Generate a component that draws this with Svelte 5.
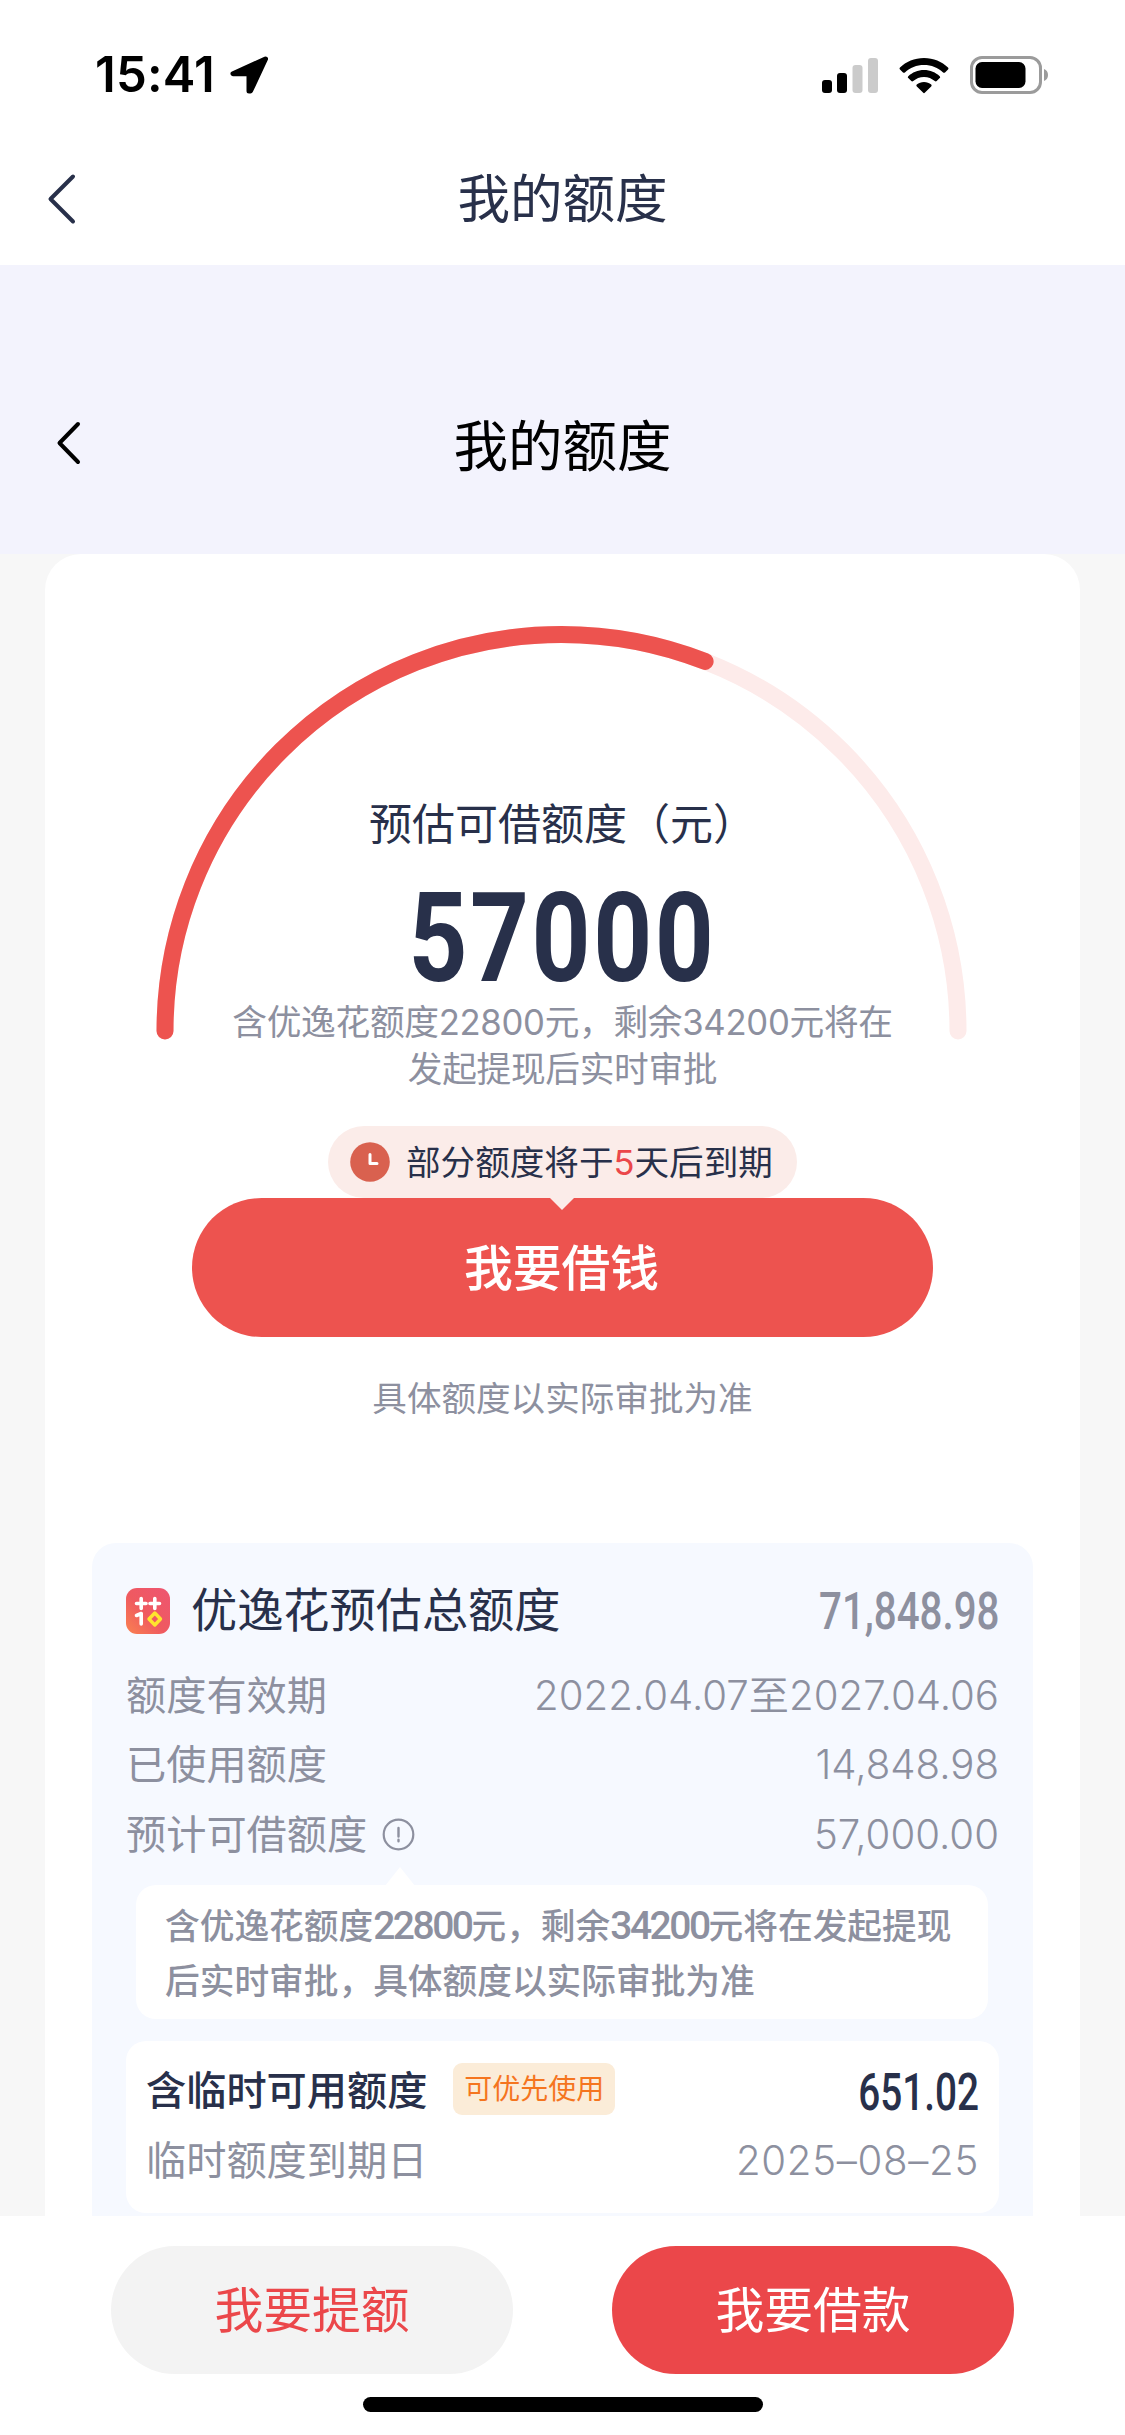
<script lang="ts">
	const radius = 396.5;
	const arc = `M ${412.5 - radius} 413 A ${radius} ${radius} 0 0 1 ${412.5 + radius} 413`;
	const progress = 61.8;

	const rows = [
		{ label: '额度有效期', value: '2022.04.07至2027.04.06' },
		{ label: '已使用额度', value: '14,848.98' },
		{ label: '预计可借额度', value: '57,000.00', info: true },
	];
</script>

<div class="screen">
	<div class="status-bar">
		<span class="time">15:41</span>
		<svg class="location" width="40" height="40" viewBox="0 0 40 40">
			<path d="M36.500 4L4 18.800H20V36L21.500 36z" stroke="#000" stroke-width="5" stroke-linejoin="round" />
		</svg>
		<div class="indicators">
			<svg width="56" height="37" viewBox="0 0 56 37">
				<rect x="0" y="23" width="10" height="13" rx="3" />
				<rect x="15" y="16" width="10" height="20" rx="3" />
				<rect x="30.500" y="8" width="10" height="28" rx="3" fill="#cbcbcb" />
				<rect x="46" y="1" width="10" height="35" rx="3" fill="#cbcbcb" />
			</svg>
			<svg class="wifi" width="50" height="37" viewBox="0 0 50 37">
				<path d="M25 1C15.500 1 7 4.600 1 10.500c-.6.600-.6 1.300 0 1.900l3 3c.6.600 1.300.6 1.900 0C11 10.500 17.600 7.900 25 7.900s14 2.600 19.100 7.500c.6.600 1.300.600 1.900 0l3-3c.6-.6.6-1.300 0-1.900C43 4.600 34.500 1 25 1z" />
				<path d="M25 13c-6.200 0-11.700 2.400-15.700 6.200-.6.600-.6 1.300 0 1.900l3 3c.6.600 1.300.6 1.900 0 2.900-2.700 6.600-4.200 10.800-4.200s7.900 1.500 10.800 4.200c.6.600 1.300.6 1.900 0l3-3c.6-.6.6-1.300 0-1.900C36.700 15.400 31.200 13 25 13z" />
				<path d="M25 25c-2.800 0-5.300 1-7.200 2.600-.6.500-.6 1.200 0 1.800l6.200 6.200c.7.700 1.300.7 2 0l6.200-6.200c.6-.6.6-1.300 0-1.800C30.300 26 27.800 25 25 25z" />
			</svg>
			<svg class="battery" width="79" height="38" viewBox="0 0 79 38">
				<rect x="1.500" y="1.500" width="69" height="35" rx="10.500" fill="none" stroke="#9b9b9b" stroke-width="3" />
				<rect x="5.500" y="6" width="50" height="26" rx="6.500" />
				<path d="M74 13c2.600.9 4 3.200 4 6s-1.400 5.100-4 6z" fill="#9b9b9b" />
			</svg>
		</div>
	</div>

	<header class="app-bar">
		<svg class="back" width="30" height="52" viewBox="0 0 30 52">
			<path d="M27 3.500L4.500 26 27 48.500" />
		</svg>
		<h1>我的额度</h1>
	</header>

	<header class="page-bar">
		<svg class="back" width="26" height="44" viewBox="0 0 26 44">
			<path d="M22 3L3.500 22 22 41" />
		</svg>
		<h2>我的额度</h2>
	</header>

	<main class="card">
		<section class="gauge">
			<svg class="gauge-arc" width="825" height="424" viewBox="0 0 825 424">
				<path d={arc} stroke="#fdebea" />
				<path d={arc} stroke="#ed534f" pathLength="100" stroke-dasharray="{progress} 200" />
			</svg>
			<p class="gauge-label">预估可借额度（元）</p>
			<p class="gauge-amount"><span class="condensed">57000</span></p>
			<p class="gauge-note">含优逸花额度22800元，剩余34200元将在<br />发起提现后实时审批</p>
		</section>

		<div class="bubble">
			<svg width="40" height="40" viewBox="0 0 40 40">
				<circle cx="20" cy="20" r="19.800" fill="#d9614f" />
				<path d="M20 12.500V21.500H27" fill="none" stroke="#fff" stroke-width="3" stroke-linecap="round" stroke-linejoin="round" />
			</svg>
			<span>部分额度将于<em>5</em>天后到期</span>
		</div>
		<button class="borrow">我要借钱</button>
		<p class="disclaimer">具体额度以实际审批为准</p>

		<section class="detail">
			<div class="detail-head">
				<svg width="44" height="46" viewBox="0 0 44 46">
					<defs>
						<linearGradient id="logo" x1="0" y1="1" x2="1" y2="0">
							<stop offset="0" stop-color="#fa8250" />
							<stop offset=".45" stop-color="#ef5a60" />
							<stop offset="1" stop-color="#ee5571" />
						</linearGradient>
					</defs>
					<rect width="44" height="46" rx="11" fill="url(#logo)" />
					<path d="M10.500 15.500H20M15.200 10.500V20.500M24 15.500H33.500M28.800 10.500V20.500M10.500 27.500L15.200 25.500V36" fill="none" stroke="#fff" stroke-width="3.600" stroke-linecap="round" stroke-linejoin="round" />
					<path d="M28.800 25L34.500 31 28.800 37 23 31z" fill="none" stroke="#ffe42e" stroke-width="3.400" stroke-linejoin="round" />
				</svg>
				<h3>优逸花预估总额度</h3>
				<span class="amount muted condensed">71,848.98</span>
			</div>

			{#each rows as row}
				<div class="row">
					<span>{row.label}</span>
					{#if row.info}
						<svg class="info" width="33" height="33" viewBox="0 0 33 33">
							<circle cx="16.500" cy="16.500" r="14.800" fill="none" stroke="#8d909f" stroke-width="2.200" />
							<path d="M16.500 10V18.500M16.500 21.800V23.200" stroke="#8d909f" stroke-width="2.400" stroke-linecap="round" />
						</svg>
					{/if}
					<span class="value">{row.value}</span>
				</div>
			{/each}

			<div class="tip">
				含优逸花额度<b>22800</b>元，剩余<b>34200</b>元将在发起提现<br />后实时审批，具体额度以实际审批为准
			</div>

			<div class="temp">
				<div class="temp-head">
					<h4>含临时可用额度</h4>
					<span class="tag">可优先使用</span>
					<span class="amount condensed">651.02</span>
				</div>
				<div class="row">
					<span>临时额度到期日</span>
					<span class="value date">2025–08–25</span>
				</div>
			</div>
		</section>
	</main>

	<footer class="actions">
		<div class="buttons">
			<button class="raise">我要提额</button>
			<button class="loan">我要借款</button>
		</div>
		<div class="home-indicator"></div>
	</footer>
</div>

<style>
	:global(body) {
		margin: 0;
	}

	.screen {
		width: 1125px;
		height: 2435px;
		display: flex;
		flex-direction: column;
		overflow: hidden;
		background: #f7f7f7;
		color: #28304a;
		font-family: Inter, 'Noto Sans CJK SC', sans-serif;
		line-height: 1.3;
	}

	h1, h2, h3, h4, p {
		margin: 0;
		font-weight: inherit;
	}

	button {
		border: none;
		padding: 0;
		font-family: inherit;
		line-height: 1.3;
	}

	svg {
		flex: none;
		display: block;
	}

	.status-bar {
		flex: none;
		height: 132px;
		box-sizing: border-box;
		padding: 18px 76px 0 95px;
		display: flex;
		align-items: center;
		background: #fff;
		color: #000;
	}

	.time {
		width: 134px;
		font-size: 49px;
		font-weight: 600;
		letter-spacing: 0.2px;
	}

	.indicators {
		margin-left: auto;
		display: flex;
		align-items: center;
	}

	.wifi {
		margin-left: 21px;
	}

	.battery {
		margin-left: 21px;
	}

	.app-bar, .page-bar {
		flex: none;
		box-sizing: border-box;
		display: grid;
		grid-template-columns: 100px 1fr 100px;
		align-items: center;
		text-align: center;
	}

	.back path {
		fill: none;
		stroke: currentColor;
		stroke-width: 4;
		stroke-linecap: round;
		stroke-linejoin: round;
	}

	.app-bar {
		height: 133px;
		background: #fff;
	}

	.app-bar .back {
		margin-left: 46px;
	}

	.app-bar h1 {
		font-size: 52.5px;
		line-height: 74px;
	}

	.page-bar {
		height: 289px;
		padding-top: 73px;
		background: #f3f3fd;
		color: #000;
	}

	.page-bar .back {
		margin: 0 0 6px 56px;
	}

	.page-bar h2 {
		font-size: 54.5px;
		line-height: 76px;
	}

	.card {
		flex: 1;
		min-height: 0;
		overflow: hidden;
		margin: 0 45px;
		padding: 0 47px;
		display: flex;
		flex-direction: column;
		align-items: center;
		background: #fff;
		border-radius: 36px 36px 0 0;
	}

	.gauge {
		position: relative;
		flex: none;
		height: 572px;
		width: 100%;
		box-sizing: border-box;
		padding-top: 240px;
		text-align: center;
	}

	.gauge-arc {
		position: absolute;
		left: 56.5px;
		top: 64px;
	}

	.gauge-arc path {
		fill: none;
		stroke-width: 17;
		stroke-linecap: round;
	}

	.gauge-label {
		font-size: 43px;
		line-height: 60px;
	}

	.condensed {
		display: inline-block;
		font-family: Roboto, sans-serif;
		transform: scaleX(0.83);
	}

	.gauge-amount {
		padding: 26px 0 4px;
		font-size: 124px;
		font-weight: 700;
		letter-spacing: 3px;
		line-height: 112px;
	}

	.gauge-note {
		margin: 0 -10px;
		font-size: 34.700px;
		letter-spacing: -0.3px;
		line-height: 46.500px;
		color: #8d909f;
	}

	.bubble {
		position: relative;
		flex: none;
		width: 469px;
		height: 72px;
		box-sizing: border-box;
		padding-left: 22px;
		display: flex;
		align-items: center;
		gap: 16px;
		border-radius: 36px;
		background: #fbece9;
		font-size: 34.600px;
		white-space: nowrap;
	}

	.bubble::after {
		content: '';
		position: absolute;
		left: 221px;
		top: 71px;
		border: 13px solid transparent;
		border-top-color: #fbece9;
		border-bottom: none;
	}

	.bubble em {
		font-style: normal;
		color: #eb474a;
	}

	.borrow {
		flex: none;
		width: 741px;
		height: 139px;
		padding: 2px 2px 0 0;
		border-radius: 70px;
		background: #ed534f;
		color: #fff;
		font-size: 48.800px;
		font-weight: 500;
	}

	.disclaimer {
		flex: none;
		margin-top: 37px;
		font-size: 34.600px;
		line-height: 48px;
		color: #8d909f;
	}

	.detail {
		flex: none;
		width: 100%;
		box-sizing: border-box;
		margin-top: 121px;
		padding: 32px 34px 30px;
		border-radius: 24px;
		background: #f6f9ff;
	}

	.detail-head {
		display: flex;
		align-items: center;
		height: 72px;
		margin-bottom: 14px;
	}

	.detail-head h3 {
		margin-left: 21px;
		padding-bottom: 2px;
		font-size: 46.200px;
		line-height: 66px;
	}

	.amount {
		margin-left: auto;
		padding-top: 2px;
		font-size: 51px;
		font-weight: 500;
		transform: scaleX(0.79);
		transform-origin: right;
	}

	.muted {
		color: #8d909f;
	}

	.row {
		display: flex;
		align-items: center;
		height: 69.300px;
		font-size: 40.200px;
		color: #8d909f;
	}

	.row span {
		padding-top: 1px;
	}

	.value {
		margin-left: auto;
		font-weight: 350;
	}

	.row .date {
		padding-top: 2px;
		letter-spacing: 0.7px;
	}

	.info {
		margin-left: 15px;
	}

	.tip {
		position: relative;
		height: 134px;
		box-sizing: border-box;
		margin: 16px 11px 22px 10px;
		padding: 14px 29px 0;
		border-radius: 20px;
		background: #fff;
		color: #8d909f;
		font-size: 34.700px;
		font-weight: 500;
		line-height: 55px;
		white-space: nowrap;
	}

	.tip::before {
		content: '';
		position: absolute;
		left: 249px;
		top: -18px;
		border: 15px solid transparent;
		border-bottom: 19px solid #fff;
		border-top: none;
	}

	.tip b {
		font-family: Roboto, sans-serif;
		font-size: 39px;
		font-weight: 500;
		letter-spacing: -2.500px;
		line-height: 1;
	}

	.temp {
		height: 172px;
		box-sizing: border-box;
		padding: 15px 20px 0;
		border-radius: 20px;
		background: #fff;
	}

	.temp-head {
		display: flex;
		align-items: center;
		height: 70px;
	}

	.temp-head h4 {
		font-size: 40.200px;
		font-weight: 500;
	}

	.temp-head .amount {
		padding-top: 5px;
		transform: scaleX(0.76);
	}

	.tag {
		margin: 0 0 4px 26px;
		padding: 0 11px;
		border-radius: 9px;
		background: #fbecd8;
		color: #f5751f;
		font-size: 28px;
		line-height: 52px;
	}

	.actions {
		flex: none;
		height: 219px;
		box-sizing: border-box;
		padding-top: 30px;
		display: flex;
		flex-direction: column;
		align-items: center;
		background: #fff;
	}

	.buttons {
		display: flex;
		gap: 99px;
	}

	.buttons button {
		width: 402px;
		height: 128px;
		padding-top: 1px;
		border-radius: 64px;
		font-size: 48.800px;
		font-weight: 400;
	}

	.raise {
		background: #f3f3f3;
		color: #eb474a;
	}

	.loan {
		background: #eb474a;
		color: #fff;
	}

	.home-indicator {
		margin-top: 23px;
		width: 400px;
		height: 15px;
		border-radius: 8px;
		background: #000;
	}
</style>
